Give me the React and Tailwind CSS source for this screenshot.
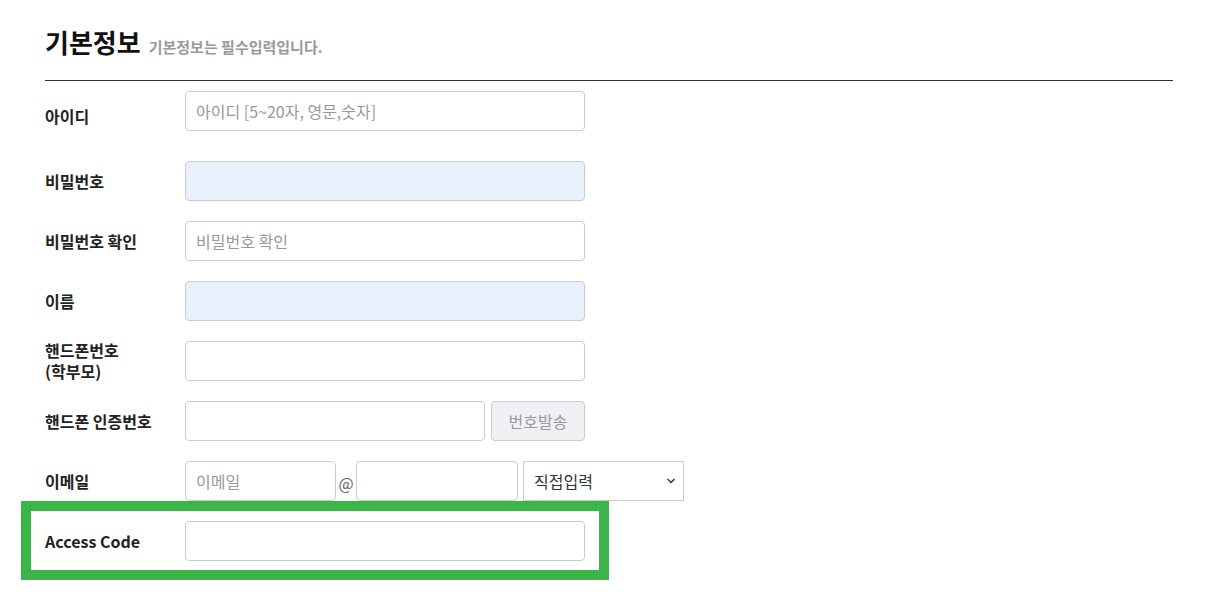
import { ChevronDown } from "lucide-react";

const fonte = {
  fontFamily: '"Noto Sans CJK KR", "Noto Sans", sans-serif',
};

function Campo({ placeholder, preenchido, largura = "w-[400px]" }) {
  return (
    <input
      placeholder={placeholder}
      className={`${largura} h-10 rounded-[4px] border border-[#cccccc] px-[10px] text-[16px] text-[#333] placeholder:text-[#999] outline-none ${
        preenchido ? "bg-[#e8f0fe]" : "bg-white"
      }`}
    />
  );
}

function Linha({ rotulo, children, espaco }) {
  return (
    <div className="flex items-center py-[10px]">
      <div className="w-[140px] shrink-0 -my-px text-[16px] leading-[21px] font-bold text-[#222]">
        {rotulo}
      </div>
      <div className="flex flex-col">
        <div className="flex items-center">{children}</div>
        {espaco && <div className="h-[10px]" />}
      </div>
    </div>
  );
}

export default function App() {
  return (
    <div className="bg-white min-h-[599px]" style={fonte}>
      <div className="ml-[45px] w-[1128px] pt-[24px]">

        <div className="flex items-baseline gap-[8px] pb-[20px] border-b border-[#333]">
          <h2 className="text-[26px] leading-[36px] font-bold text-[#111]">
            기본정보
          </h2>
          <span className="text-[15px] font-bold text-[#999]">
            기본정보는 필수입력입니다.
          </span>
        </div>

        <Linha rotulo="아이디" espaco>
          <Campo placeholder="아이디 [5~20자, 영문,숫자]" />
        </Linha>

        <Linha rotulo="비밀번호">
          <Campo preenchido />
        </Linha>

        <Linha rotulo="비밀번호 확인">
          <Campo placeholder="비밀번호 확인" />
        </Linha>

        <Linha rotulo="이름">
          <Campo preenchido />
        </Linha>

        <Linha
          rotulo={
            <>
              핸드폰번호
              <br />
              (학부모)
            </>
          }
        >
          <Campo />
        </Linha>

        <Linha rotulo="핸드폰 인증번호">
          <Campo largura="w-[300px]" />
          <button
            type="button"
            className="ml-[6px] w-[94px] h-10 rounded-[4px] border border-[#cccccc] bg-[#eef0f4] text-[16px] text-[#999]"
          >
            번호발송
          </button>
        </Linha>

        <Linha rotulo="이메일">
          <Campo placeholder="이메일" largura="w-[151px]" />
          <span className="w-[20px] text-center text-[16px] text-[#666] pt-[4px]">
            @
          </span>
          <Campo largura="w-[162px]" />
          <div className="ml-[5px] w-[161px] h-10 border border-[#cccccc] bg-white flex items-center justify-between pl-[10px] pr-[6px]">
            <span className="text-[16px] text-[#333]">직접입력</span>
            <ChevronDown size={12} strokeWidth={3.5} className="text-[#444]" />
          </div>
        </Linha>

        <div className="relative">
          <Linha rotulo="Access Code">
            <Campo />
          </Linha>
          <div className="absolute left-[-24px] top-[-10px] w-[588px] h-[79px] border-[10px] border-[#3bb54a] pointer-events-none" />
        </div>

      </div>
    </div>
  );
}
